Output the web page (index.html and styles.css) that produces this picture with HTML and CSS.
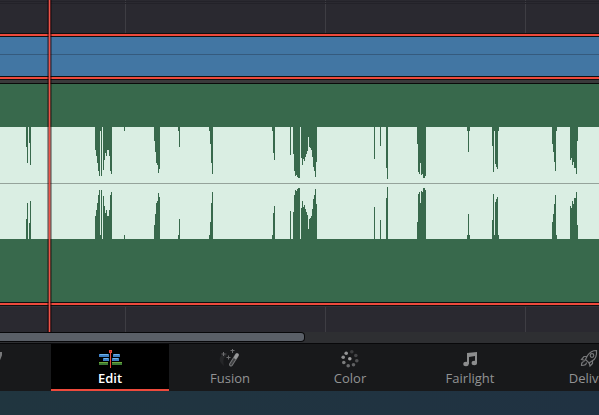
FILE: index.html
```html
<!DOCTYPE html>
<html lang="en">
<head>
    <meta charset="UTF-8">
    <meta name="viewport" content="width=device-width, initial-scale=1.0">
    <title>Timeline</title>
    <link rel="stylesheet" href="styles.css">
</head>
<body>
    <main class="timeline">
        <div class="track top"></div>
        <div class="clip video"></div>
        <div class="divider"></div>
        <div class="clip audio">
            <div class="wave">
                <svg width="599" height="112" viewBox="0 0 599 112" shape-rendering="crispEdges" aria-hidden="true">
                    <defs>
                        <!-- quiet parts, one column per pixel -->
                        <path id="dips" d="M26 0V20h1V36h1V0z M29 0V16h1V38h1V0z
                            M95 0V23h1V29h1V36h1V44h1V49h1V4h1V49h1V0z
                            M103 0V43h1V33h1V26h1V29h1V23h2V29h1V44h1V47h1V0z
                            M124 0V4h1V0z
                            M154 0V14h1V25h1V36h1V38h1V46h1V42h1V0z
                            M178 0V4h1V20h1V0z
                            M209 0V4h1V17h1V36h1V47h1V0z
                            M272 0V4h1V26h1V33h1V0z
                            M290 0V28h1V0z
                            M293 0V27h1V44h1V49h1V48h1V50h1V51h2V0z
                            M301 0V31h1V38h1V32h1V34h1V30h1V27h1V24h1V10h1V20h1V21h1V23h1V30h1V40h1V44h1V50h1V35h1V0z
                            M374 0V32h1V0z M380 0V19h1V0z
                            M386 0V41h1V52h1V0z
                            M417 0V17h1V45h1V47h1V36h1V48h1V47h1V51h2V49h1V0z
                            M467 0V4h1V25h1V4h1V0z
                            M492 0V19h1V45h1V4h1V37h1V40h1V42h1V4h1V0z
                            M552 0V17h1V25h1V35h1V44h1V4h1V0z
                            M570 0V33h1V31h1V38h1V35h1V41h2V47h1V14h1V0z"/>
                    </defs>
                    <use href="#dips"/>
                    <use href="#dips" transform="translate(0 112) scale(1 -1)"/>
                </svg>
            </div>
        </div>
        <div class="track bottom"></div>
        <div class="playhead"></div>
    </main>
    <div class="scrollbar"><div class="thumb"></div></div>
    <nav class="pages">
        <button type="button" aria-label="Cut">
            <svg width="24" height="20" viewBox="0 0 24 20" fill="none" stroke="#77787a" stroke-width="2">
                <path d="M23 3v3l-2 5"/>
            </svg>
        </button>
        <button type="button" class="active">
            <svg width="24" height="20" viewBox="0 0 24 20">
                <path fill="#3f7fc4" d="M1 5h10v3H1zM15 5h7v3h-7zM5 9h6v3H5zM14 9h7v3h-7z"/>
                <path fill="#6fb0e8" d="M2 5h8v1H2zM16 5h5v1h-5zM6 9h4v1H6zM15 9h5v1h-5z"/>
                <path fill="#3c7a32" d="M1 13h9v3H1zM14 13h10v3H14z"/>
                <path fill="#6fa83e" d="M1 13h9v1H1zM14 13h10v1H14z"/>
                <path fill="#e8483c" d="M11 1h3v3h-1v15h-1V4h-1z"/>
                <path fill="#a82c22" d="M12 2h1v1h-1z"/>
            </svg>
            <span>Edit</span>
        </button>
        <button type="button">
            <svg width="24" height="20" viewBox="0 0 24 20">
                <path d="M9 4C2 5 0 10 3 14l3 3C5 12 5 9 9 6z" fill="#252628"/>
                <path d="M13 15.500L19 6" stroke="#77787a" stroke-width="4" stroke-linecap="round"/>
                <path d="M13 15.500L16.800 9.500" stroke="#3f4042" stroke-width="2" stroke-linecap="round"/>
                <path d="M17.500 8.500L19 6" stroke="#98999a" stroke-width="3" stroke-linecap="round"/>
                <path d="M5.500 3v4M3.500 5h4M14.500 0v4M12.500 1.500h4M10.500 6.500v4M8.500 8.500h4" stroke="#6c6d6f" stroke-width="1"/>
            </svg>
            <span>Fusion</span>
        </button>
        <button type="button">
            <svg width="24" height="20" viewBox="0 0 24 20">
                <circle cx="11.800" cy="9.800" r="1.800" fill="#a0a0a1"/>
                <circle cx="8.200" cy="4.200" r="1.800" fill="#949596"/>
                <circle cx="5.200" cy="8.200" r="1.800" fill="#8e8f90"/>
                <circle cx="5.800" cy="13.500" r="1.800" fill="#7b7c7d"/>
                <circle cx="10.200" cy="16.800" r="1.800" fill="#6b6c6e"/>
                <circle cx="15.500" cy="15.800" r="1.800" fill="#606163"/>
                <circle cx="18.800" cy="11.800" r="1.800" fill="#515254"/>
                <circle cx="17.800" cy="6.500" r="1.800" fill="#454648"/>
                <circle cx="13.800" cy="2.800" r="1.800" fill="#3c3d3f"/>
            </svg>
            <span>Color</span>
        </button>
        <button type="button">
            <svg width="24" height="20" viewBox="0 0 24 20" fill="#8c8d8e">
                <path d="M9 4l10-1v11h-2V7l-6 1v7H9z"/>
                <ellipse cx="8" cy="15" rx="2.700" ry="2.200"/>
                <ellipse cx="16.300" cy="14" rx="2.700" ry="2.200"/>
            </svg>
            <span>Fairlight</span>
        </button>
        <button type="button">
            <svg width="24" height="20" viewBox="0 0 24 20" fill="none" stroke="#77787a" stroke-width="1.200">
                <path d="M18.500 1.500c-5 0-7 2-9 5l-2 4 3.500 3.500 3-2c4-2 5-5 4.500-10.500z"/>
                <circle cx="14" cy="6.500" r="1.800"/>
                <path d="M9 7.500H6L3.500 10.500l4 1M14.500 12v2.500l-2.500 2.500-1-4M6.500 12.500c-3 0-3 2-3 4 3 0 5-1 5-3"/>
            </svg>
            <span>Deliver</span>
        </button>
    </nav>
</body>
</html>
```
FILE: styles.css
```css
*{
    margin: 0;
    padding: 0;
    box-sizing: border-box;
}
body{
    background: linear-gradient(to right, #20353f, #203242);
    font-family: "Open Sans", "Noto Sans", sans-serif;
    overflow: hidden;
}
.timeline{
    position: relative;
}
.track{
    background: linear-gradient(to right, #3e3d43 1px, transparent 1px) 125px 0 / 200px 100%, #2a2930;
}
.top{
    height: 33px;
    background: linear-gradient(#232229, #232229) 0 1px / 100% 1px no-repeat,
        linear-gradient(#232229, #232229) 0 3px / 100% 1px no-repeat,
        linear-gradient(to right, #3e3d43 1px, transparent 1px) 125px 0 / 200px 100%,
        #2a2930;
}
.bottom{
    height: 26px;
    border-top: 1px solid #333238;
}
/* selected clips: black, red, black */
.clip{
    display: flex;
    flex-direction: column;
    border-top: 1px solid #101010;
    border-bottom: 1px solid #101010;
}
.clip::before,
.clip::after{
    content: "";
    height: 3px;
    background: #ee4a3c;
    box-sizing: border-box;
}
.clip::before{
    border-bottom: 1px solid #101010;
}
.clip::after{
    margin-top: auto;
    border-top: 1px solid #101010;
}
.video{
    height: 47px;
    background: linear-gradient(#355a7d, #355a7d) 0 20px / 100% 1px no-repeat, #4276a3;
}
.divider{
    height: 4px;
    background: #3a3a3b;
    border-bottom: 1px solid #0a0a0a;
}
.audio{
    height: 222px;
    padding-top: 43px;
    border-top: 0;
    background: #38694c;
}
.audio::before{
    display: none;
}
.wave{
    height: 112px;
    overflow: hidden;
    background: linear-gradient(#95a39b, #95a39b) 0 56px / 100% 1px no-repeat, #daeee3;
}
.wave svg{
    display: block;
    fill: #38694c;
}
.playhead{
    position: absolute;
    top: 0;
    bottom: 0;
    left: 47px;
    width: 5px;
    background: linear-gradient(to right, rgba(0,0,0,.35) 1px, rgba(110,25,25,.7) 1px 2px, #f0554a 2px 3px, rgba(110,25,25,.7) 3px 4px, rgba(0,0,0,.35) 4px);
}
.scrollbar{
    height: 12px;
    background: #2e2f32;
    border-bottom: 1px solid #08080a;
}
.thumb{
    width: 51%;
    height: 10px;
    background: #5a5f67;
    border: 1px solid #08080a;
    border-left: 0;
    border-radius: 0 4px 4px 0;
}
.pages{
    display: flex;
    gap: 2px;
    margin-left: -69px;
    background: #18191b;
    overflow: hidden;
}
.pages button{
    display: flex;
    flex-direction: column;
    align-items: center;
    flex: none;
    width: 118px;
    height: 47px;
    padding-top: 5px;
    border: 0;
    border-bottom: 2px solid transparent;
    background: none;
    color: #929394;
    font-family: inherit;
    font-size: 13px;
    line-height: 18px;
}
.pages .active{
    background: #000;
    border-bottom-color: #ee4a3c;
    color: #fff;
    font-weight: 600;
}
```
